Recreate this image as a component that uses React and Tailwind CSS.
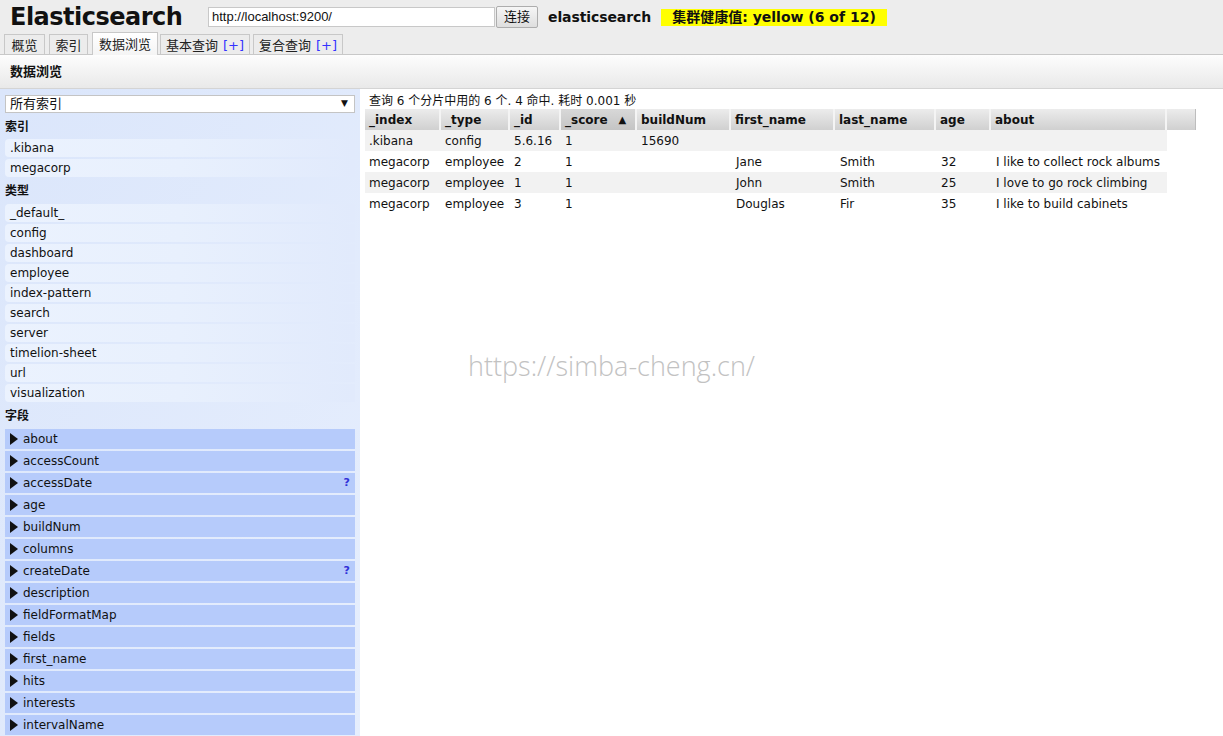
import React from 'react';

const FONT = { fontFamily: '"DejaVu Sans", Verdana, "Noto Sans CJK SC", sans-serif' };

const indices = ['.kibana', 'megacorp'];
const types = ['_default_', 'config', 'dashboard', 'employee', 'index-pattern', 'search', 'server', 'timelion-sheet', 'url', 'visualization'];
const fields = [
  ['about'], ['accessCount'], ['accessDate', true], ['age'], ['buildNum'], ['columns'], ['createDate', true],
  ['description'], ['fieldFormatMap'], ['fields'], ['first_name'], ['hits'], ['interests'], ['intervalName'],
];

const cols = [
  ['_index', 76], ['_type', 69], ['_id', 51], ['_score', 76], ['buildNum', 94],
  ['first_name', 104], ['last_name', 101], ['age', 55], ['about', 176],
];

const rows = [
  ['.kibana', 'config', '5.6.16', '1', '15690', '', '', '', ''],
  ['megacorp', 'employee', '2', '1', '', 'Jane', 'Smith', '32', 'I like to collect rock albums'],
  ['megacorp', 'employee', '1', '1', '', 'John', 'Smith', '25', 'I love to go rock climbing'],
  ['megacorp', 'employee', '3', '1', '', 'Douglas', 'Fir', '35', 'I like to build cabinets'],
];

function Tab({ children, active, className }) {
  return (
    <div
      className={`flex items-center justify-center border border-b-0 border-[#c8c8c8] pt-[2px] text-[13px] text-[#222] ${
        active ? 'h-[23px] -mb-px bg-gradient-to-b from-white to-[#f4f4f4] relative z-10' : 'h-[20px] bg-[#ececec]'
      } ${className}`}
    >
      {children}
    </div>
  );
}

function Plus() {
  return <span className="ml-[5px] text-[#3333ff]">[+]</span>;
}

function Arrow() {
  return (
    <svg width="8" height="12" viewBox="0 0 8 12" className="mr-[5px] shrink-0">
      <polygon points="0,0 8,6 0,12" fill="#111" />
    </svg>
  );
}

const itemCls =
  'mb-[2px] flex h-[18px] items-center rounded-l-[4px] bg-gradient-to-r from-[#ebf2fe] via-[#e8f0fd] to-[#e1eafc] pl-[5px] text-[12px]';

export default function App() {
  return (
    <div className="relative h-[736px] w-[1223px] overflow-hidden bg-white text-[#111]" style={FONT}>
      {/* HEADER */}
      <div className="bg-[#ededed] border-b border-[#c8c8c8]">
        <div className="flex h-[34px] items-center">
          <div className="ml-[10px] w-[190px] text-[24px] font-bold leading-none tracking-[-0.5px]">Elasticsearch</div>
          <div
            className="ml-[8px] flex h-[20px] w-[287px] items-center border border-[#c8c8c8] bg-white px-[3px] text-[13px]"
            style={{ fontFamily: '"Liberation Sans", Arial, sans-serif' }}
          >
            http://localhost:9200/
          </div>
          <div className="ml-px flex h-[22px] w-[42px] items-center justify-center rounded-[2px] border border-[#adadad] bg-gradient-to-b from-[#f6f6f6] to-[#dedede] text-[13px]">
            连接
          </div>
          <div className="ml-[10px] text-[14px] font-bold tracking-[-0.1px]">elasticsearch</div>
          <div className="ml-[10px] flex h-[17px] w-[226px] items-center justify-center bg-[#ffff00] text-[14px] font-bold">
            集群健康值: yellow (6 of 12)
          </div>
        </div>
        <div className="flex h-[20px] items-end">
          <Tab className="ml-[4px] w-[41px]">概览</Tab>
          <Tab className="ml-[4px] w-[39px]">索引</Tab>
          <Tab className="ml-[4px] w-[66px]" active>数据浏览</Tab>
          <Tab className="ml-[2px] w-[90px]">基本查询<Plus /></Tab>
          <Tab className="ml-[3px] w-[90px]">复合查询<Plus /></Tab>
        </div>
      </div>

      {/* SECTION TITLE */}
      <div className="flex h-[34px] items-center border-b border-[#d4d4d4] bg-gradient-to-b from-[#fdfdfd] to-[#e9e9e9] pl-[10px] text-[13px] font-bold">
        数据浏览
      </div>

      {/* BODY */}
      <div className="flex">
        <div className="w-[360px] shrink-0 bg-gradient-to-br from-[#dbe6fb] to-[#e6eefd] px-[5px] pt-[6px]">
          <div className="flex h-[18px] items-center justify-between border border-[#c4c4c4] bg-white pl-[4px] pr-[6px] text-[13px]">
            <span>所有索引</span>
            <span className="text-[9px]">▼</span>
          </div>

          <div className="flex h-[26px] items-center pt-[1px] text-[12px] font-bold">索引</div>
          {indices.map((n) => (
            <div key={n} className={itemCls}>{n}</div>
          ))}

          <div className="-mt-[1px] flex h-[26px] items-center text-[12px] font-bold">类型</div>
          {types.map((n) => (
            <div key={n} className={itemCls}>{n}</div>
          ))}

          <div className="-mt-[1px] flex h-[26px] items-center text-[12px] font-bold">字段</div>
          {fields.map(([n, q]) => (
            <div key={n} className="mb-[2px] flex h-[20px] w-[350px] items-center bg-[#b6cbfb] pl-[5px] pr-[5px] text-[12px]">
              <Arrow />
              <span className="flex-1">{n}</span>
              {q && <span className="text-[11px] font-bold text-[#3030d8]">?</span>}
            </div>
          ))}
        </div>

        <div className="flex-1 pl-[5px] pt-[4px]">
          <div className="h-[16px] pl-[4px] text-[12px] leading-[16px]">查询 6 个分片中用的 6 个. 4 命中. 耗时 0.001 秒</div>
          <div className="flex">
            {cols.map(([c, w]) => (
              <div
                key={c}
                className={`flex h-[21px] items-center border-r-2 border-[#f4f4f4] pl-[4px] text-[12px] font-bold ${
                  c === '_score' ? 'bg-gradient-to-b from-[#d8d8d8] to-[#c4c4c4]' : 'bg-gradient-to-b from-[#ececec] to-[#d0d0d0]'
                }`}
                style={{ width: w }}
              >
                {c}
                {c === '_score' && <span className="ml-[11px] text-[10px]">▲</span>}
              </div>
            ))}
            <div className="h-[21px] w-[29px] border-r border-[#bdbdbd] bg-gradient-to-b from-[#ececec] to-[#d0d0d0]" />
          </div>
          {rows.map((r, i) => (
            <div key={i} className={`flex h-[21px] w-[802px] items-center ${i % 2 === 0 ? 'bg-[#f2f2f2]' : 'bg-white'}`}>
              {r.map((v, j) => (
                <div key={j} className={`whitespace-nowrap text-[12px] ${j >= 5 ? 'pl-[5px]' : 'pl-[4px]'}`} style={{ width: cols[j][1] }}>
                  {v}
                </div>
              ))}
            </div>
          ))}
        </div>
      </div>

      {/* WATERMARK */}
      <div
        className="pointer-events-none absolute left-[468px] top-[346px] text-[27px] text-[#c2c2c2]"
        style={{ fontFamily: '"Open Sans", "Noto Sans", sans-serif', fontWeight: 300 }}
      >
        https://simba-cheng.cn/
      </div>
    </div>
  );
}
